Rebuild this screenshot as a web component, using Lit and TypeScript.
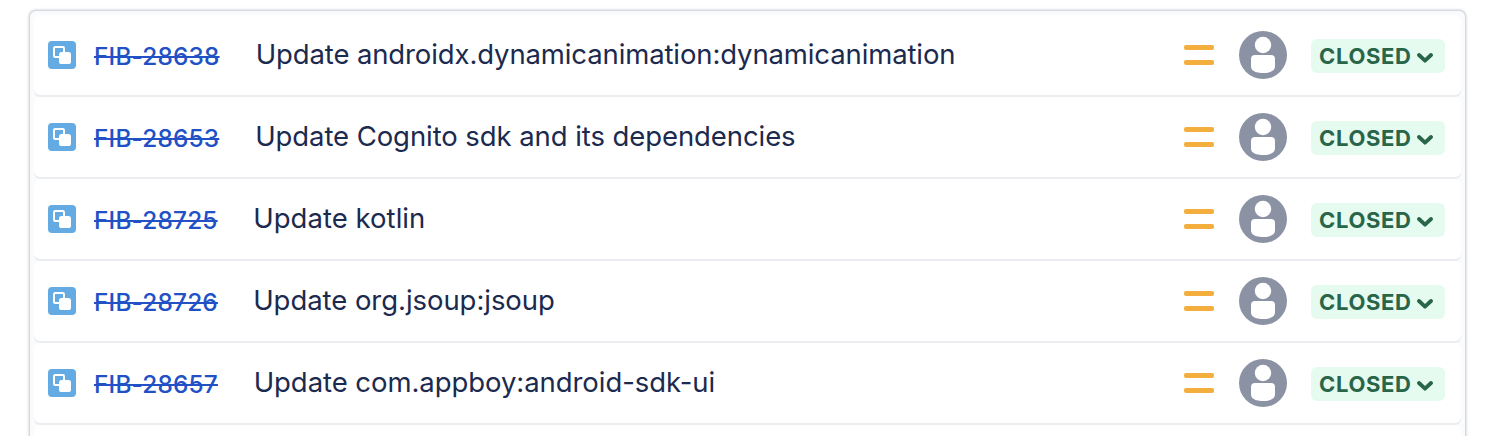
import { LitElement, html, css, svg } from "lit";
import { customElement, property } from "lit/decorators.js";

interface Issue {
  key: string;
  title: string;
  keyWidth: number;
  tracking: number;
}

const ISSUES: Issue[] = [
  { key: "FIB-28638", title: "Update androidx.dynamicanimation:dynamicanimation", keyWidth: 126, tracking: -0.12 },
  { key: "FIB-28653", title: "Update Cognito sdk and its dependencies", keyWidth: 125.5, tracking: -0.08 },
  { key: "FIB-28725", title: "Update kotlin", keyWidth: 123.5, tracking: 0.04 },
  { key: "FIB-28726", title: "Update org.jsoup:jsoup", keyWidth: 123.5, tracking: -0.05 },
  { key: "FIB-28657", title: "Update com.appboy:android-sdk-ui", keyWidth: 124, tracking: -0.06 },
];

const subtaskIcon = svg`
  <rect width="28" height="28" rx="4" fill="#65abe3"/>
  <rect x="6" y="6" width="10" height="10" rx="1.2" fill="none" stroke="#fff" stroke-width="2"/>
  <rect x="11" y="11" width="12" height="12" rx="2.6" fill="#fff"/>`;

@customElement("issue-row")
class IssueRow extends LitElement {
  @property({ attribute: false }) issue!: Issue;

  static styles = css`
    :host {
      display: flex;
      align-items: center;
      box-sizing: border-box;
      height: 80px;
      padding: 0 16px 0 14px;
      margin-bottom: 2px;
      background: #fff;
      border-radius: 6px;
      box-shadow: 0 2px 0 #ebecf0;
      font-family: Inter, "Liberation Sans", sans-serif;
      white-space: nowrap;
    }
    svg { display: block; flex: none; }
    .key {
      margin-left: 18px;
      padding-top: 2px;
      font-size: 24.4px;
      line-height: 30px;
      font-weight: 500;
      color: #2251c6;
      letter-spacing: 0.18px;
      text-decoration: line-through;
      text-decoration-thickness: 2px;
    }
    .title {
      flex: 1;
      margin-left: 35.7px;
      padding-bottom: 2px;
      font-size: 27.5px;
      line-height: 34px;
      color: #1b2a4e;
    }
    .avatar { margin: 0 24px 0 25px; }
    .status {
      display: flex;
      align-items: center;
      box-sizing: border-box;
      width: 134px;
      height: 34px;
      margin-top: 2px;
      padding-left: 8px;
      border-radius: 6px;
      background: #e6fbf0;
      color: #296548;
    }
    .label {
      width: 98px;
      font-size: 22px;
      line-height: 34px;
      font-weight: 700;
      letter-spacing: 0.65px;
    }
    .chevron { margin-top: 3px; }
  `;

  render() {
    return html`
      <svg width="28" height="28" viewBox="0 0 28 28">${subtaskIcon}</svg>
      <span class="key" style="width:${this.issue.keyWidth}px">${this.issue.key}</span>
      <span class="title" style="letter-spacing:${this.issue.tracking}px">${this.issue.title}</span>
      <svg width="30" height="20" viewBox="0 0 30 20">
        <rect width="30" height="5" rx="2" fill="#f3ae3d"/>
        <rect y="15" width="30" height="5" rx="2" fill="#f3ae3d"/>
      </svg>
      <svg class="avatar" width="48" height="48" viewBox="0 0 48 48">
        <circle cx="24" cy="24" r="24" fill="#8b92a4"/>
        <circle cx="24" cy="14" r="8.2" fill="#fff"/>
        <path d="M12 28a4 4 0 0 1 4-4h16a4 4 0 0 1 4 4v7.500c0 4.500-5.500 6.500-12 6.500s-12-2-12-6.500z" fill="#fff"/>
      </svg>
      <span class="status">
        <span class="label">CLOSED</span>
        <svg class="chevron" width="16" height="10" viewBox="0 0 16 10">
          <path d="M2 2l6 5.700 6-5.700" fill="none" stroke="#296548" stroke-width="3.800" stroke-linecap="round" stroke-linejoin="round"/>
        </svg>
      </span>
    `;
  }
}

@customElement("app-root")
class AppRoot extends LitElement {
  static styles = css`
    :host {
      display: block;
      box-sizing: border-box;
      height: 436px;
      padding: 11px 29px 0 30px;
      overflow: hidden;
      background: #fff;
    }
    .card {
      box-sizing: border-box;
      height: 460px;
      padding: 4px;
      border-radius: 6px;
      background: #fafbfc;
      box-shadow: 0 0 0 1px #d6d8df, 0 0 3px 1px rgba(9, 30, 66, 0.25);
    }
    .next {
      height: 80px;
      background: #fff;
      border-radius: 6px;
    }
  `;

  render() {
    return html`
      <div class="card">
        ${ISSUES.map((issue) => html`<issue-row .issue=${issue}></issue-row>`)}
        <div class="next"></div>
      </div>
    `;
  }
}
